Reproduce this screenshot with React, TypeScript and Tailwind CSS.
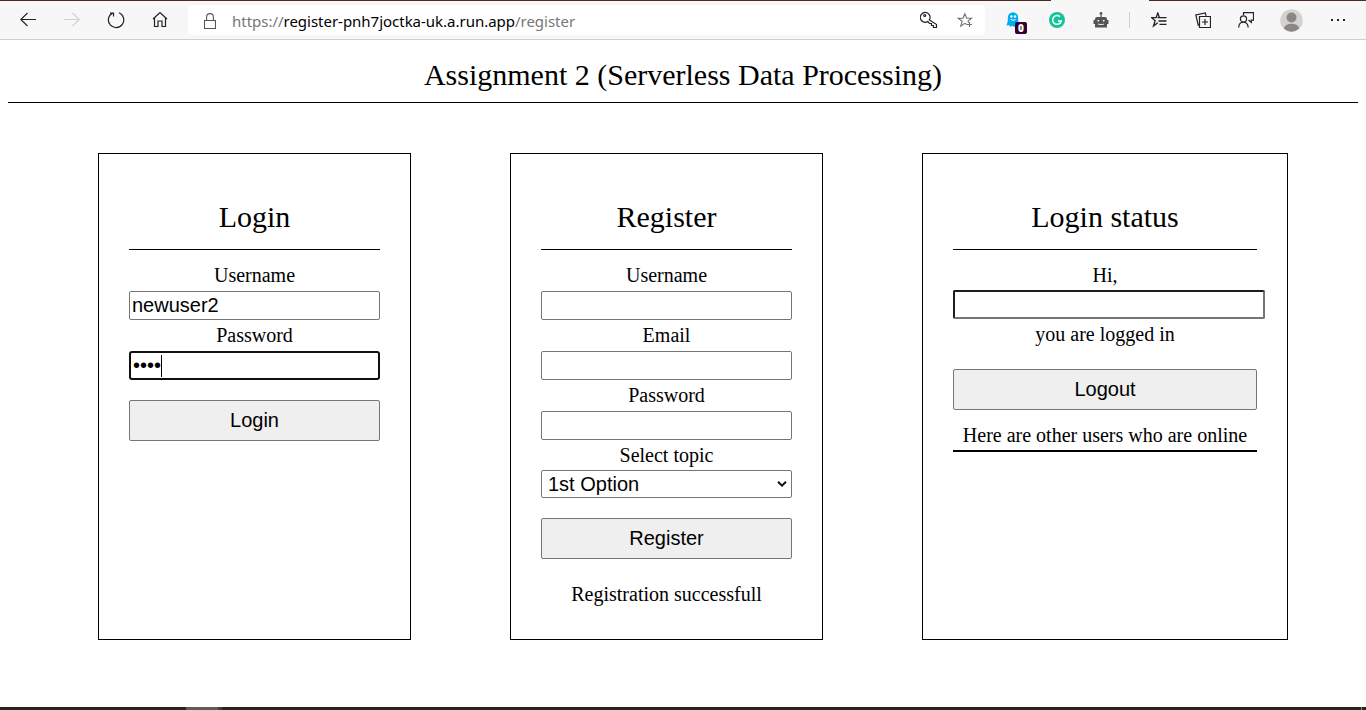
import React from "react";

const stroke = { fill: "none", stroke: "#222", strokeWidth: 1.1 } as const;

function BrowserBar() {
  return (
    <div>
      <div className="flex h-px bg-[#4a2c20]">
        <div className="ml-[1051px] w-[98px] bg-[#f7f7f7]" />
      </div>
      <header className="flex h-[39px] items-center border-b border-[#cfcfcf] bg-[#f7f7f7]">
        <svg className="ml-[20px] h-5 w-4 shrink-0" viewBox="0 0 16 20" {...stroke}>
          <path d="M7.5 3 .8 9.5l6.7 6.5M1 9.5h15" />
        </svg>
        <svg className="ml-[28px] h-5 w-4 shrink-0" viewBox="0 0 16 20" {...stroke} stroke="#d0d0d0">
          <path d="M8.5 3l6.7 6.5L8.500 16M15 9.500H0" />
        </svg>
        <svg className="ml-[27px] h-5 w-[18px] shrink-0" viewBox="0 0 18 20" {...stroke} strokeWidth="1.2">
          <path d="M12 2.800A7.700 7.700 0 1 1 5.500 3.100M3 3h3.500v3.500" />
        </svg>
        <svg className="ml-[27px] h-5 w-4 shrink-0" viewBox="0 0 16 20" {...stroke} strokeWidth="1.2">
          <path d="M1 9 8 2.500 15 9M2.500 8v8.500h3.500v-5.500h4v5.500h3.500V8" />
        </svg>
        <div className="ml-[20px] flex h-[30px] w-[797px] shrink-0 items-center rounded bg-white">
          <svg className="ml-[16px] h-5 w-3 shrink-0" viewBox="0 0 12 20" {...stroke} stroke="#555">
            <path d="M.5 10.500h11v8H.5zM2.600 10.500V7a3.400 3.400 0 0 1 6.800 0v3.500" />
          </svg>
          <div className="ml-[16px] w-[400px] whitespace-nowrap pt-[2px] font-['Noto_Sans',sans-serif] text-[15px] leading-5 tracking-[-0.02px] text-[#777]">
            https://<span className="text-black">register-pnh7joctka-uk.a.run.app</span>/register
          </div>
          <svg className="ml-[288px] h-5 w-[18px] shrink-0" viewBox="0 0 18 20" {...stroke} strokeWidth="1.2">
            <path d="M9.200 9.800 16.500 14.500v3h-3v-2h-2v-2h-2L7.800 11.500A4.900 4.900 0 1 1 9.800 9z" />
            <circle cx="4.700" cy="5.500" r="1" />
          </svg>
          <svg className="ml-[19px] h-5 w-[18px] shrink-0" viewBox="0 0 18 20" {...stroke} stroke="#707070">
            <path d="M10 12.500 7.800 11.300 3.700 14.200l1.500-4.900-4-3h4.900L7.800 1.700l1.900 4.600h4.900l-3.600 2.800.5 1.500M12.500 10v5M10 12.500h5" transform="translate(0 2)" />
          </svg>
        </div>
        <div className="relative ml-[21px] h-6 w-[22px] shrink-0">
          <svg className="h-6 w-[22px]" viewBox="0 0 22 24">
            <path d="M1.800 9.500a5.200 5.200 0 0 1 10.400 0v9l-2-1.200-2 1.700-2-1.200-2 1.200L3.500 17.300l-3 .2L1.800 13z" fill="#00aef0" />
            <circle cx="5.400" cy="8.500" r="1.200" fill="#fff" />
            <circle cx="9" cy="8.500" r="1.200" fill="#fff" />
            <path d="M4.700 11.400q2.400 2 4.800 0" fill="none" stroke="#fff" />
          </svg>
          <div className="absolute left-[9px] top-[14px] flex h-3 w-3 items-center justify-center rounded-[2px] bg-[#33002f] font-['Open_Sans',sans-serif] text-[10px] font-extrabold leading-3 text-white">0</div>
        </div>
        <svg className="ml-[21px] h-4 w-4 shrink-0" viewBox="0 0 16 16">
          <circle cx="8" cy="8" r="8" fill="#15c39a" />
          <path d="M11 4.700A4.400 4.400 0 1 0 12.300 9H9M12.300 9l-1.300 3" fill="none" stroke="#fff" strokeWidth="1.500" />
        </svg>
        <svg className="ml-[28px] h-4 w-4 shrink-0" viewBox="0 0 16 16">
          <path d="M7.400 2.500h1.200V5H12a2 2 0 0 1 2 2v1h1.500v4H14v3.500H2V12H.5V8H2V7a2 2 0 0 1 2-2h3.400z" fill="#555" />
          <circle cx="8" cy="1.500" r="1.400" fill="#555" />
          <path d="M4.500 8.800h1.600M9.900 8.800h1.600" stroke="#f7f7f7" strokeWidth="1.600" />
          <path d="M5 12.200q3 .7 6 0" fill="none" stroke="#f7f7f7" strokeWidth=".9" />
        </svg>
        <div className="ml-[20px] h-4 w-px shrink-0 bg-[#cfcfcf]" />
        <svg className="ml-[21px] h-4 w-4 shrink-0" viewBox="0 0 16 16" {...stroke} strokeWidth="1.300">
          <path d="M8.500 5.700 6.800 1 5.100 5.700H.6l3.600 3L2.500 14l4.300-3.200M6.500 5.700h9M7.500 9h8M8.500 12.400h7" />
        </svg>
        <svg className="ml-[28px] h-4 w-4 shrink-0" viewBox="0 0 16 16" {...stroke} strokeWidth="1.200">
          <path d="M4.500 4.500h11v11h-11zM10 7v6M7 10h6M4.500 12.500l-1.300.4L.8 3 10.300.9l.8 3" />
        </svg>
        <svg className="ml-[27px] h-4 w-4 shrink-0" viewBox="0 0 16 16" {...stroke} strokeWidth="1.200">
          <path d="M5.500 3V.6h10v7.500h-2.200v2.400L10.500 8M.7 15.500C.8 8.500 9.800 8.500 10.200 15.500" />
          <circle cx="5.500" cy="7" r="3.100" />
        </svg>
        <svg className="ml-[26px] h-[23px] w-[23px] shrink-0" viewBox="0 0 23 23">
          <circle cx="11.500" cy="11.500" r="11.300" fill="#d4d2cf" />
          <circle cx="11.500" cy="8.500" r="5" fill="#8b8785" />
          <path d="M3.800 19.500Q5 14.800 11.500 14.800t7.700 4.700q-7.700 6.500-15.400 0" fill="#8b8785" />
        </svg>
        <svg className="ml-[27px] h-4 w-4 shrink-0" viewBox="0 0 16 16" fill="#222">
          <path d="M1 7h2v2H1zM7 7h2v2H7zM13 7h2v2h-2z" />
        </svg>
      </header>
    </div>
  );
}

function Card({ title, wide, children }: { title: string; wide?: boolean; children: React.ReactNode }) {
  return (
    <section className={`h-[487px] shrink-0 border border-black px-[30px] text-center ${wide ? "w-[366px]" : "w-[313px]"}`}>
      <h2 className="mb-[10px] h-24 border-b border-black pt-[46px] text-[30px] leading-[34px]">{title}</h2>
      {children}
    </section>
  );
}

function Label({ children }: { children: React.ReactNode }) {
  return <label className="block h-[31px] text-[20px] leading-[31px]">{children}</label>;
}

function Field({ value = "" }: { value?: string }) {
  return (
    <input
      className="block h-[29px] w-full rounded-[2px] border border-[#767676] bg-white px-[2px] font-['Liberation_Sans',sans-serif] text-[20px] leading-6 outline-none"
      defaultValue={value}
    />
  );
}

function Button({ children }: { children: React.ReactNode }) {
  return (
    <button className="block h-[41px] w-full rounded-[2px] border border-[#767676] bg-[#efefef] font-['Liberation_Sans',sans-serif] text-[20px] leading-[23px]">
      {children}
    </button>
  );
}

export default function App() {
  return (
    <div className="flex h-[710px] w-[1366px] flex-col overflow-hidden bg-white font-['Liberation_Serif',serif] text-black">
      <BrowserBar />
      <h1 className="mx-2 h-[63px] border-b border-black pt-[18px] text-center text-[30px] leading-[34px]">
        Assignment 2 (Serverless Data Processing)
      </h1>
      <main className="ml-[98px] mt-[50px] flex flex-1 gap-[99px]">
        <Card title="Login">
          <Label>Username</Label>
          <Field value="newuser2" />
          <Label>Password</Label>
          <div className="mb-5 flex h-[29px] items-center rounded-[3px] border-2 border-[#101010] pl-[2px]">
            <span className="flex h-[23px] items-center font-['Liberation_Sans',sans-serif] text-[20px] leading-[23px]">••••</span>
            <span className="h-[22px] w-px bg-black" />
          </div>
          <Button>Login</Button>
        </Card>
        <Card title="Register">
          <Label>Username</Label>
          <Field />
          <Label>Email</Label>
          <Field />
          <Label>Password</Label>
          <Field />
          <Label>Select topic</Label>
          <div className="-mt-px mb-5 flex h-7 items-center justify-between rounded-[2px] border border-[#767676] pl-[6px] pr-1 font-['Liberation_Sans',sans-serif] text-[20px] leading-[26px]">
            <span>1st Option</span>
            <svg className="h-[6px] w-[10px]" viewBox="0 0 10 6" fill="none" stroke="#111" strokeWidth="2">
              <path d="M1 .8 5 4.600 9 .8" />
            </svg>
          </div>
          <Button>Register</Button>
          <p className="mt-5 text-[20px] leading-[31px]">Registration successfull</p>
        </Card>
        <Card title="Login status" wide>
          <Label>Hi,</Label>
          <div className="-mt-px h-[29px] w-[312px] rounded-[2px] border-2 border-b-[#767676] border-l-[#1e1e1e] border-r-[#767676] border-t-[#1e1e1e]" />
          <Label>you are logged in</Label>
          <div className="mt-[19px]">
            <Button>Logout</Button>
          </div>
          <p className="mt-[11px] h-[31px] whitespace-nowrap border-b-2 border-black text-[20px] leading-[29px]">
            Here are other users who are online
          </p>
        </Card>
      </main>
      <footer className="flex h-[3px] shrink-0 bg-[#2c251f]">
        <div className="ml-[186px] w-8 bg-[#625c55]" />
        <div className="w-1 bg-[#453d36]" />
        <div className="ml-[1139px] w-px bg-[#888]" />
      </footer>
    </div>
  );
}
